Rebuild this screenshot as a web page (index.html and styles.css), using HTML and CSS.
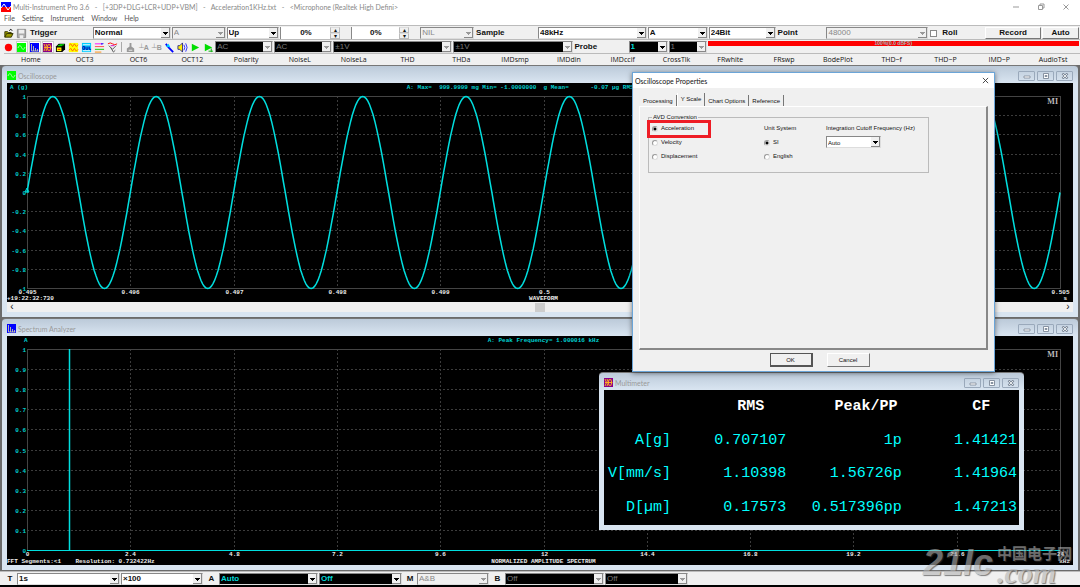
FILE: index.html
```
<!DOCTYPE html>
<html lang="en">
<head>
  <meta charset="UTF-8">
  <meta name="viewport" content="width=device-width, initial-scale=1.0">
  <title>Multi-Instrument Pro 3.6</title>
  <link rel="stylesheet" href="styles.css">
</head>
<body>
  <!-- icons used more than once -->
  <svg class="defs" aria-hidden="true">
    <symbol id="i-osc" viewBox="0 0 9 9"><path fill="#0f0" d="M0 0h9v9H0z"/><path d="M1 5c1-3 2.500-3 3.500-.5S7 7 8 4" fill="none" stroke="#cfc" stroke-width=".8"/></symbol>
    <symbol id="i-spec" viewBox="0 0 9 9"><path fill="#00f" d="M0 0h9v9H0z"/><path d="M1.500 1v7h7M3.500 3v5M5.500 5v3M7.500 6v2" fill="none" stroke="#dd9" stroke-width=".8"/></symbol>
    <symbol id="i-dmm" viewBox="0 0 9 9"><path fill="#808" d="M0 0h9v9H0z"/><path d="M1 1l1.500 3.500L1 8M3 1l1.500 3.500L3 8M5.500 1L4 4.500 5.500 8M6.500 1L8 4.500 6.500 8M1 4.500h7" fill="none" stroke="#fa2"/></symbol>
    <symbol id="i-min" viewBox="0 0 8 6"><path d="M1 3h6v2H1z" fill="#fff" stroke="#7d8998" stroke-width=".8"/></symbol>
    <symbol id="i-max" viewBox="0 0 8 6"><path d="M1.500.5h5v5h-5zM3 2.500h2v1H3z" fill="#fff" stroke="#7d8998" stroke-width=".9"/></symbol>
    <symbol id="i-close" viewBox="0 0 8 6"><path d="M1.500.5L6.500 5.500M6.500.5L1.500 5.500" stroke="#7d8998" stroke-width="2.400"/><path d="M2 1l4 4M6 1L2 5" stroke="#fff" stroke-width=".8"/></symbol>
  </svg>

  <header class="titlebar">
    <svg class="app-icon" viewBox="0 0 10 10"><path fill="#00f" d="M0 0h10v5H0z"/><path fill="#f00" d="M0 5h10v5H0z"/><path d="M0 6l3-4 4 6 3-4" fill="none" stroke="#fff"/></svg>
    <span class="app-title">Multi-Instrument Pro 3.6 &nbsp; - &nbsp; [+3DP+DLG+LCR+UDP+VBM] &nbsp; - &nbsp; Acceleration1KHz.txt &nbsp; - &nbsp; &lt;Microphone (Realtek High Defini&gt;</span>
    <div class="sys-buttons">
      <button aria-label="Minimize"><svg viewBox="0 0 8 8"><path d="M1 4h6"/></svg></button>
      <button aria-label="Restore"><svg viewBox="0 0 8 8"><path d="M1.500 2.500h4v4h-4zM3 2.500V1h4v4H5.500"/></svg></button>
      <button aria-label="Close"><svg viewBox="0 0 8 8"><path d="M1.500 1.500l5 5M6.500 1.500l-5 5"/></svg></button>
    </div>
  </header>

  <nav class="menu">
    <a href="#">File</a><a href="#">Setting</a><a href="#">Instrument</a><a href="#">Window</a><a href="#">Help</a>
  </nav>

  <div class="bar bar-trigger">
    <div class="icons">
      <button aria-label="Open"><svg viewBox="0 0 12 12"><path d="M2 10V4h3l1 1h3v2M2 10l2-4h7l-2 4z" fill="#990" stroke="#330"/><path d="M7 3c1-2 2-2 3 0" fill="none" stroke="#000"/></svg></button>
      <button aria-label="Save"><svg viewBox="0 0 12 12"><path d="M1.500 1.500h9v9h-9z" fill="#aaa" stroke="#888"/><path d="M3 2h6v4H3zM4 8h4v3H4z" fill="#eee"/></svg></button>
    </div>
    <label for="trigMode">Trigger</label>
    <div class="combo"><select id="trigMode"><option>Normal</option></select></div>
    <div class="combo off"><select aria-label="Trigger source" disabled><option>A</option></select></div>
    <div class="combo"><select aria-label="Trigger edge"><option>Up</option></select></div>
    <div class="spin"><input type="text" aria-label="Trigger level" value="0%"><button aria-label="Up">▴</button><button aria-label="Down">▾</button></div>
    <div class="spin"><input type="text" aria-label="Trigger delay" value="0%"><button aria-label="Up">▴</button><button aria-label="Down">▾</button></div>
    <div class="combo off"><select aria-label="Filter" disabled><option>NIL</option></select></div>
    <label for="rate">Sample</label>
    <div class="combo"><select id="rate"><option>48kHz</option></select></div>
    <div class="combo"><select aria-label="Channels"><option>A</option></select></div>
    <div class="combo"><select aria-label="Bit depth"><option>24Bit</option></select></div>
    <label for="points">Point</label>
    <div class="combo off"><select id="points" disabled><option>48000</option></select></div>
    <label class="check"><input type="checkbox">Roll</label>
    <button class="push">Record</button>
    <button class="push">Auto</button>
  </div>

  <div class="bar bar-input">
    <div class="icons">
      <button aria-label="Run"><svg viewBox="0 0 12 12"><circle cx="6" cy="6" r="4" fill="#f00"/></svg></button>
      <button class="on" aria-label="Oscilloscope"><svg><use href="#i-osc"/></svg></button>
      <button class="on" aria-label="Spectrum analyzer"><svg><use href="#i-spec"/></svg></button>
      <button class="on" aria-label="Multimeter"><svg><use href="#i-dmm"/></svg></button>
      <button aria-label="3D plot"><svg viewBox="0 0 12 12"><path d="M1 5l3-3h7v6l-3 3H1z" fill="#000"/><path d="M2 6h5v4H2z" fill="#ff0"/><path d="M3 4h5M5 3h5" stroke="#0f0"/><path d="M3 8h3" stroke="#f00"/></svg></button>
      <button aria-label="Data logger"><svg viewBox="0 0 12 12"><path d="M1 1h10v10H1z" fill="#ff0"/><path d="M1 4l2-2 2 3 2-3 2 3 2-2M1 9l2-2 2 3 2-3 2 3 2-2" fill="none" stroke="#f60"/></svg></button>
      <button aria-label="Device test plan"><svg viewBox="0 0 12 12"><path d="M1 1h10v10H1z" fill="#0cf"/><path d="M2 3h8M2 9.500h8" stroke="#fff"/><path d="M2 5v3h2V5zM5.500 5v3h2V5M9 5v3h2" fill="none" stroke="#00a"/></svg></button>
      <button aria-label="Derived data"><svg viewBox="0 0 12 12"><path d="M1 2h8" stroke="#f0f"/><path d="M1 5h10" stroke="#f44"/><path d="M1 8h10" stroke="#0c0"/><path d="M1 11h7" stroke="#f80"/><path d="M8 1l3 1-3 1z" fill="#00f"/></svg></button>
      <button aria-label="Vibrometer"><svg viewBox="0 0 12 12"><path d="M1 2q2.500-2 5 0t5 0" fill="none" stroke="#f00"/><path d="M2 4l4 4 4-4M4 6l3 5 2-2" fill="none" stroke="#555"/><path d="M4 4h4" stroke="#c0c"/></svg></button>
      <i class="sep"></i>
      <button aria-label="Calibrate"><svg viewBox="0 0 12 12"><path d="M5 1h2v4l3 2v4H2V7l3-2z" fill="#999"/><path d="M4 9h4" stroke="#eee"/></svg></button>
      <button class="zero" aria-label="Zero A">┴A</button>
      <button class="zero" aria-label="Zero B">┴B</button>
      <button aria-label="Probe"><svg viewBox="0 0 12 12"><path d="M2 2l3 4 5 5" fill="none" stroke="#00f" stroke-width="2"/><path d="M2 5l3-3 2 4z" fill="#0cf"/></svg></button>
      <button aria-label="Sound"><svg viewBox="0 0 12 12"><path d="M1 4h2l3-3v10L3 8H1z" fill="#fe0" stroke="#008" stroke-width=".8"/><path d="M7.500 3q2 3 0 6M9.500 1.500q3 4.500 0 9" fill="none" stroke="#22f"/></svg></button>
      <button aria-label="Play"><svg viewBox="0 0 12 12"><path d="M2 2l8 4-8 4z" fill="#0d0"/></svg></button>
      <button aria-label="Play loop"><svg viewBox="0 0 12 12"><path d="M2 2l8 4-8 4z" fill="#0d0"/><path d="M6 10h5M9 7v4" stroke="#0a0"/></svg></button>
    </div>
    <div class="combo dark off"><select aria-label="Coupling A" disabled><option>AC</option></select></div>
    <div class="combo dark off"><select aria-label="Coupling B" disabled><option>AC</option></select></div>
    <div class="combo dark off"><select aria-label="Range A" disabled><option>±1V</option></select></div>
    <div class="combo dark off"><select aria-label="Range B" disabled><option>±1V</option></select></div>
    <label for="probe">Probe</label>
    <div class="combo dark"><select id="probe"><option>1</option></select></div>
    <div class="combo dark off"><select aria-label="Probe B" disabled><option>1</option></select></div>
    <div class="level">100%(0.0 dBFS)</div>
  </div>

  <nav class="hotbar">
    <a href="#">Home</a><a href="#">OCT3</a><a href="#">OCT6</a><a href="#">OCT12</a><a href="#">Polarity</a>
    <a href="#">NoiseL</a><a href="#">NoiseLa</a><a href="#">THD</a><a href="#">THDa</a><a href="#">IMDsmp</a>
    <a href="#">IMDdin</a><a href="#">IMDccif</a><a href="#">CrossTlk</a><a href="#">FRwhite</a><a href="#">FRswp</a>
    <a href="#">BodePlot</a><a href="#">THD~f</a><a href="#">THD~P</a><a href="#">IMD~P</a><a href="#">AudioTst</a>
  </nav>

  <main class="workspace">
    <section class="win">
      <div class="win-title">
        <svg class="win-icon"><use href="#i-osc"/></svg><h2>Oscilloscope</h2>
        <div class="win-buttons"><button aria-label="Minimize"><svg><use href="#i-min"/></svg></button><button aria-label="Maximize"><svg><use href="#i-max"/></svg></button><button aria-label="Close"><svg><use href="#i-close"/></svg></button></div>
      </div>
      <svg class="chart" id="scope"></svg>
      <div class="scroll"><button aria-label="Scroll left">‹</button><span class="thumb"></span><button aria-label="Scroll right">›</button></div>
    </section>

    <section class="win">
      <div class="win-title">
        <svg class="win-icon"><use href="#i-spec"/></svg><h2>Spectrum Analyzer</h2>
        <div class="win-buttons"><button aria-label="Minimize"><svg><use href="#i-min"/></svg></button><button aria-label="Maximize"><svg><use href="#i-max"/></svg></button><button aria-label="Close"><svg><use href="#i-close"/></svg></button></div>
      </div>
      <svg class="chart" id="spectrum"></svg>
    </section>

    <section class="win meter">
      <div class="win-title">
        <svg class="win-icon"><use href="#i-dmm"/></svg><h2>Multimeter</h2>
        <div class="win-buttons"><button aria-label="Minimize"><svg><use href="#i-min"/></svg></button><button aria-label="Maximize"><svg><use href="#i-max"/></svg></button><button aria-label="Close"><svg><use href="#i-close"/></svg></button></div>
      </div>
      <table>
        <tr><td class="unit"></td><th>RMS</th><th>Peak/PP</th><th>CF</th></tr>
        <tr><td>A[g]</td><td>0.707107</td><td>1p</td><td>1.41421</td></tr>
        <tr><td>V[mm/s]</td><td>1.10398</td><td>1.56726p</td><td>1.41964</td></tr>
        <tr><td>D[µm]</td><td>0.17573</td><td>0.517396pp</td><td>1.47213</td></tr>
      </table>
    </section>

    <form class="dialog">
      <div class="dialog-title">
        <h2>Oscilloscope Properties</h2>
        <button type="button" aria-label="Close"><svg viewBox="0 0 8 8"><path d="M1 1l6 6M7 1L1 7"/></svg></button>
      </div>
      <div class="tabs">
        <button type="button">Processing</button>
        <button type="button" class="active">Y Scale</button>
        <button type="button">Chart Options</button>
        <button type="button">Reference</button>
      </div>
      <div class="panel">
        <fieldset>
          <legend>AVD Conversion</legend>
          <div class="col">
            <label class="marked"><input type="radio" name="avd" checked>Acceleration</label>
            <label><input type="radio" name="avd">Velocity</label>
            <label><input type="radio" name="avd">Displacement</label>
          </div>
          <div class="col">
            <span>Unit System</span>
            <label><input type="radio" name="unit" checked>SI</label>
            <label><input type="radio" name="unit">English</label>
          </div>
          <div class="col">
            <label for="cutoff">Integration Cutoff Frequency (Hz)</label>
            <div class="combo"><select id="cutoff"><option>Auto</option></select></div>
          </div>
        </fieldset>
      </div>
      <div class="actions">
        <button type="button" class="push default">OK</button>
        <button type="button" class="push">Cancel</button>
      </div>
    </form>
  </main>

  <footer class="bar bar-bottom">
    <label for="sweep">T</label>
    <div class="combo"><select id="sweep"><option>1s</option></select></div>
    <div class="combo"><select aria-label="Zoom"><option>×100</option></select></div>
    <label for="chA">A</label>
    <div class="combo dark"><select id="chA"><option>Auto</option></select></div>
    <div class="combo dark"><select aria-label="A offset"><option>Off</option></select></div>
    <label for="mode">M</label>
    <div class="combo off"><select id="mode" disabled><option>A&amp;B</option></select></div>
    <label for="chB">B</label>
    <div class="combo dark off"><select id="chB" disabled><option>Off</option></select></div>
    <div class="combo dark off"><select aria-label="B offset" disabled><option>Off</option></select></div>
  </footer>

  <div class="watermark"><b>21Ic</b><div><span>中国电子网</span><i>.com</i></div></div>

  <script src="charts.js"></script>
</body>
</html>
```
FILE: styles.css
```
* {
  box-sizing: border-box;
}
body {
  margin: 0;
  height: 100vh;
  display: flex;
  flex-direction: column;
  font-family: "Liberation Sans", Arial, sans-serif;
  font-size: 8px;
  line-height: 10px;
  color: #111;
  background: #f0f0f0;
  border-bottom: 2px solid #000;
  overflow: hidden;
}
button, input, select {
  font: inherit;
  color: inherit;
  margin: 0;
  padding: 0;
  border: 0;
  background: none;
}
a {
  color: inherit;
  text-decoration: none;
}
h2 {
  margin: 0;
  font-size: 7px;
  font-weight: 400;
}
svg {
  display: block;
}
.defs {
  position: absolute;
  width: 0;
  height: 0;
}

/* title bar and menu */
.titlebar, .menu, h2 {
  font-family: Lato, "Open Sans", sans-serif;
}
.titlebar {
  display: flex;
  align-items: center;
  gap: 2px;
  height: 13px;
  background: #fff;
  color: #888;
  font-size: 7px;
}
.app-icon {
  width: 10px;
  height: 10px;
  margin-left: 1px;
}
.app-title {
  flex: 1;
  white-space: pre;
}
.sys-buttons {
  display: flex;
  gap: 17px;
  padding-right: 10px;
}
.sys-buttons svg {
  width: 8px;
  height: 8px;
  fill: none;
  stroke: #999;
  stroke-width: 1;
}
.menu {
  display: flex;
  gap: 7px;
  height: 12px;
  padding: 0 4px;
  background: #fff;
  color: #555;
  font-size: 7px;
  line-height: 11px;
}

/* toolbars */
.bar {
  display: grid;
  gap: 1px;
  height: 14px;
  padding: 1px 1px 0 3px;
  align-items: stretch;
  border-top: 1px solid #bbb;
  font-weight: 700;
}
.bar label {
  padding-left: 1px;
  line-height: 12px;
}
.bar-trigger {
  grid-template-columns: 25fr 63fr 78fr 54fr 53fr 70fr 68fr 54fr 62fr 109fr 60fr 67fr 49fr 102fr 55fr 56fr 37fr;
}
.bar-input {
  grid-template-columns: 211fr 58fr 58fr 119fr 119fr 54fr 39fr 38fr 371fr;
}
.bar-bottom {
  grid-template-columns: 13fr 103fr 82fr 14fr 99fr 83fr 13fr 72fr 14fr 99fr 83fr 390fr;
}
.bar-bottom label {
  text-align: center;
}
.bar > * {
  min-width: 0;
}
.icons {
  display: flex;
  align-items: center;
  gap: 1px;
}
.icons button {
  width: 12px;
  height: 12px;
}
.icons svg {
  width: 11px;
  height: 11px;
  margin: auto;
}
.icons .on {
  background: #fff;
  border: 1px solid #ccc;
}
.icons .on svg {
  width: 9px;
  height: 9px;
}
.icons .zero {
  font-size: 7px;
  line-height: 11px;
  color: #999;
}
.sep {
  width: 1px;
  height: 10px;
  margin: 0 2px;
  background: #aaa;
}
.combo {
  position: relative;
  display: flex;
  background: #fff;
  border: 1px solid #888;
  border-right-color: #ddd;
  border-bottom-color: #ddd;
}
.combo select {
  flex: 1;
  min-width: 0;
  padding: 0 9px 0 1px;
  appearance: none;
  opacity: 1;
}
.combo::after {
  content: "";
  position: absolute;
  top: 0;
  right: 0;
  bottom: 0;
  width: 8px;
  background: linear-gradient(#000, #000) 2px 4px / 5px 1px no-repeat, linear-gradient(#000, #000) 3px 5px / 3px 1px no-repeat, linear-gradient(#000, #000) 4px 6px / 1px 1px no-repeat, #f0f0f0;
  border-right: 1px solid #888;
  border-bottom: 1px solid #888;
  pointer-events: none;
}
.combo.off {
  background: #f0f0f0;
  color: #888;
  font-weight: 400;
}
.combo.off::after {
  background: linear-gradient(#999, #999) 2px 4px / 5px 1px no-repeat, linear-gradient(#999, #999) 3px 5px / 3px 1px no-repeat, linear-gradient(#999, #999) 4px 6px / 1px 1px no-repeat, #f0f0f0;
}
.combo.dark {
  background: #000;
  color: #00d8d8;
}
.combo.dark.off {
  color: #777;
}
.spin {
  display: grid;
  grid-template-columns: 1fr 10px;
  grid-template-rows: 1fr 1fr;
  padding-right: 10px;
}
.spin input {
  grid-row: 1 / 3;
  min-width: 0;
  text-align: center;
  background: #fff;
  border-left: 1px solid #888;
}
.spin button {
  overflow: hidden;
  font-size: 6px;
  font-weight: 400;
  line-height: 4px;
  border: 1px solid #bbb;
  border-top-color: #ddd;
}
.check {
  display: flex;
  align-items: center;
  gap: 5px;
}
.check input {
  appearance: none;
  width: 7px;
  height: 7px;
  background: #fff;
  border: 1px solid #888;
}
.push {
  background: #f0f0f0;
  border: 1px solid #fff;
  border-right-color: #777;
  border-bottom-color: #777;
}
.level {
  align-self: start;
  height: 5px;
  background: #f00;
  color: #9bb;
  font-size: 5px;
  line-height: 5px;
  text-align: center;
}
.hotbar {
  display: grid;
  grid-template-columns: repeat(20, 1fr);
  height: 12px;
  margin: 0 0 0 4px;
  border-top: 1px solid #bbb;
  font-family: "Open Sans", "Noto Sans", sans-serif;
  font-size: 7px;
  line-height: 11px;
  text-align: center;
}

/* child windows */
.workspace {
  position: relative;
  flex: 1;
  min-height: 0;
  display: flex;
  flex-direction: column;
  gap: 1px;
  padding: 0 2px 1px;
  background: #6b6b6b;
}
.win {
  flex: 1;
  min-height: 0;
  display: flex;
  flex-direction: column;
  padding: 0 5px 5px;
  border-top: 1px solid #777;
  border-radius: 4px 4px 0 0;
  background: linear-gradient(#bccad9, #d9e5f1 17px);
}
.win-title {
  display: flex;
  align-items: center;
  gap: 2px;
  height: 17px;
  padding-top: 2px;
  color: #999;
}
.win-icon {
  width: 9px;
  height: 9px;
}
.win-title h2 {
  flex: 1;
}
.win-buttons {
  display: flex;
  gap: 2px;
}
.win-buttons button {
  width: 17px;
  height: 10px;
  border: 1px solid #9aa9bb;
  border-radius: 1px;
}
.win-buttons svg {
  width: 8px;
  height: 6px;
  margin: auto;
}
.chart {
  flex: 1;
  min-height: 0;
  width: 100%;
  background: #000;
  font-family: "Liberation Mono", monospace;
  font-size: 6px;
  font-weight: 700;
}
.chart text {
  white-space: pre;
}
.chart .grid {
  stroke: #3c3c3c;
  stroke-dasharray: 2 2;
}
.chart .frame {
  fill: none;
  stroke: #444;
}
.chart .trace {
  fill: none;
  stroke: #00dede;
}
.chart .wave {
  stroke-width: 1.5;
}
.chart .cyan {
  fill: #00d0d0;
}
.chart .white {
  fill: #eee;
}
.chart .logo {
  font-family: "Liberation Serif", serif;
  font-size: 8px;
  fill: #bbb;
}
.end {
  text-anchor: end;
}
.middle {
  text-anchor: middle;
}
.scroll {
  display: flex;
  align-items: center;
  justify-content: space-between;
  height: 10px;
  background: #f0f0f0;
}
.scroll button {
  width: 10px;
  font-size: 10px;
  line-height: 8px;
}
.thumb {
  width: 10px;
  height: 9px;
  background: #cdcdcd;
}

/* floating windows */
.meter {
  position: absolute;
  left: 599px;
  top: 307px;
  width: 425px;
  height: 158px;
}
.meter table {
  flex: 1;
  width: 100%;
  table-layout: fixed;
  border-collapse: collapse;
  background: #000;
  color: #0ff;
  font-family: "Liberation Mono", monospace;
  font-size: 15px;
  line-height: 20px;
}
.meter td {
  padding: 0 2px 0 0;
  text-align: right;
}
.meter .unit {
  width: 69px;
}
.meter th {
  padding: 0 0 0 40px;
  color: #fff;
}
.dialog {
  position: absolute;
  left: 632px;
  top: 7px;
  width: 363px;
  height: 300px;
  display: flex;
  flex-direction: column;
  background: #f0f0f0;
  border: 1px solid #6ba5d8;
  box-shadow: 0 1px 5px rgba(0, 0, 0, .5);
  font-size: 6px;
  line-height: 8px;
}
.dialog-title {
  display: flex;
  align-items: center;
  justify-content: space-between;
  height: 15px;
  padding: 0 5px 0 2px;
  background: #fff;
}
.dialog-title svg {
  width: 7px;
  height: 7px;
  stroke: #333;
}
.tabs {
  display: flex;
  align-items: flex-end;
  height: 18px;
  padding-left: 7px;
}
.tabs button {
  height: 11px;
  padding: 0 3px;
  border-right: 1px solid #777;
}
.tabs .active {
  height: 13px;
  padding-bottom: 2px;
  border-left: 1px solid #fff;
}
.panel {
  flex: 1;
  margin: 0 6px;
  padding: 6px 8px;
  border: 1px solid #fff;
  border-right: 2px solid #888;
  border-bottom: 2px solid #888;
}
fieldset {
  display: grid;
  grid-template-columns: 112px 62px 1fr;
  width: 281px;
  height: 60px;
  margin: 0;
  padding: 1px 3px;
  border: 1px solid #bbb;
}
legend {
  padding: 0 1px;
}
.col {
  display: flex;
  flex-direction: column;
  align-items: flex-start;
  gap: 1px;
}
.col > * {
  height: 13px;
  line-height: 13px;
}
.col label {
  display: flex;
  align-items: center;
  gap: 3px;
}
.col input {
  appearance: none;
  width: 6px;
  height: 6px;
  border: 1px solid #999;
  border-right-color: #ddd;
  border-bottom-color: #ddd;
  border-radius: 50%;
  background: #fff;
}
.col input:checked {
  background: radial-gradient(#000 1px, #fff 2px);
}
.col .combo {
  width: 55px;
  height: 12px;
}
.col .marked {
  position: relative;
}
.marked::after {
  content: "";
  position: absolute;
  left: -5px;
  top: -2px;
  width: 58px;
  height: 12px;
  border: 3px solid #ee1c25;
}
.actions {
  display: flex;
  justify-content: center;
  gap: 14px;
  height: 21px;
  padding: 3px 0 4px 12px;
}
.actions button {
  width: 43px;
}
.actions .default {
  border: 1px solid #555;
  border-right-width: 2px;
  border-bottom-width: 2px;
}

/* site mark */
.watermark {
  position: absolute;
  right: 8px;
  bottom: 4px;
  display: flex;
  align-items: flex-start;
  gap: 4px;
  color: #b4b4b4;
  opacity: .6;
  text-shadow: 1px 1px 1px #333;
}
.watermark b {
  font-size: 36px;
  line-height: 40px;
  font-style: italic;
}
.watermark div {
  display: flex;
  flex-direction: column;
}
.watermark span {
  font: 700 15px/20px "Noto Sans CJK SC", sans-serif;
}
.watermark i {
  font: italic 700 30px/20px "Liberation Serif", serif;
}
```
FILE: charts.js
```
const NS = 'http://www.w3.org/2000/svg';
const margin = { left: 20, right: 13, top: 13, bottom: 14 };

function add(svg, tag, attrs, text) {
  const el = document.createElementNS(NS, tag);
  for (const key in attrs) el.setAttribute(key, attrs[key]);
  if (text) el.textContent = text;
  svg.appendChild(el);
}

function drawFrame(svg, xLabels, yLabels, bottom) {
  svg.innerHTML = '';
  const w = svg.clientWidth;
  const h = svg.clientHeight;
  const box = {
    x: margin.left,
    y: margin.top,
    w: w - margin.left - margin.right,
    h: h - margin.top - bottom,
    full: w,
    base: h
  };
  for (let i = 0; i <= 10; i++) {
    const x = Math.round(box.x + box.w * i / 10) + 0.5;
    const y = Math.round(box.y + box.h * i / 10) + 0.5;
    if (i > 0 && i < 10) {
      add(svg, 'line', { class: 'grid', x1: x, x2: x, y1: box.y, y2: box.y + box.h });
      add(svg, 'line', { class: 'grid', x1: box.x, x2: box.x + box.w, y1: y, y2: y });
    }
    add(svg, 'text', { class: 'white middle', x: x, y: box.y + box.h + 6 }, xLabels[i]);
    add(svg, 'text', { class: 'cyan end', x: box.x - 1, y: y + 2 }, yLabels[i]);
  }
  add(svg, 'rect', { class: 'frame', x: box.x + 0.5, y: box.y + 0.5, width: box.w, height: box.h });
  add(svg, 'text', { class: 'logo end', x: box.x + box.w - 2, y: box.y + 8 }, 'MI');
  return box;
}

function drawScope() {
  const svg = document.getElementById('scope');
  const x = ['0.495', '0.496', '0.497', '0.498', '0.499', '0.5', '0.501', '0.502', '0.503', '0.504', '0.505'];
  const y = ['1', '0.8', '0.6', '0.4', '0.2', '0', '-0.2', '-0.4', '-0.6', '-0.8', '-1'];
  const b = drawFrame(svg, x, y, margin.bottom);
  let d = '';
  for (let i = 0; i <= 600; i++) {
    const px = b.x + b.w * i / 600;
    const py = b.y + b.h / 2 * (1 - Math.sin(i / 600 * 20 * Math.PI));
    d += (i ? 'L' : 'M') + px.toFixed(1) + ' ' + (py + 0.5).toFixed(1);
  }
  add(svg, 'path', { class: 'trace wave', d: d });
  const mid = b.y + b.h / 2;
  add(svg, 'path', { class: 'trace', d: `M${b.x - 2} ${mid}l2 -4l2 4z` });
  add(svg, 'text', { class: 'cyan', x: 3, y: 6 }, 'A (g)');
  add(svg, 'text', { class: 'cyan', x: b.full * 0.375, y: 6 }, 'A: Max=  999.9999 mg Min= -1.0000000  g Mean=      -0.07 µg RMS=');
  add(svg, 'text', { class: 'white', x: 0, y: b.base - 2 }, '+19:22:32:730');
  add(svg, 'text', { class: 'white middle', x: b.x + b.w / 2, y: b.base - 2 }, 'WAVEFORM');
  add(svg, 'text', { class: 'white end', x: b.full - 6, y: b.base - 2 }, 's');
}

function drawSpectrum() {
  const svg = document.getElementById('spectrum');
  const x = ['0', '2.4', '4.8', '7.2', '9.6', '12', '14.4', '16.8', '19.2', '21.6', '24'];
  const y = ['1', '0.9', '0.8', '0.7', '0.6', '0.5', '0.4', '0.3', '0.2', '0.1', '0'];
  const b = drawFrame(svg, x, y, margin.bottom + 1);
  const peak = Math.round(b.x + b.w / 24) - 0.5;
  add(svg, 'path', { class: 'trace', d: `M${b.x} ${b.y + b.h + 0.5}h${b.w}` });
  add(svg, 'path', { class: 'trace wave', d: `M${peak} ${b.y}v${b.h}` });
  add(svg, 'text', { class: 'cyan', x: 17, y: 6 }, 'A');
  add(svg, 'text', { class: 'cyan middle', x: b.x + b.w / 2, y: 6 }, 'A: Peak Frequency= 1.000016 kHz');
  add(svg, 'text', { class: 'white', x: 0, y: b.base - 2 }, 'FFT Segments:<1    Resolution: 0.732422Hz');
  add(svg, 'text', { class: 'white middle', x: b.x + b.w / 2, y: b.base - 2 }, 'NORMALIZED AMPLITUDE SPECTRUM');
  add(svg, 'text', { class: 'white end', x: b.full - 3, y: b.base - 2 }, 'kHz');
}

function draw() {
  drawScope();
  drawSpectrum();
}

window.addEventListener('resize', draw);
draw();
```
